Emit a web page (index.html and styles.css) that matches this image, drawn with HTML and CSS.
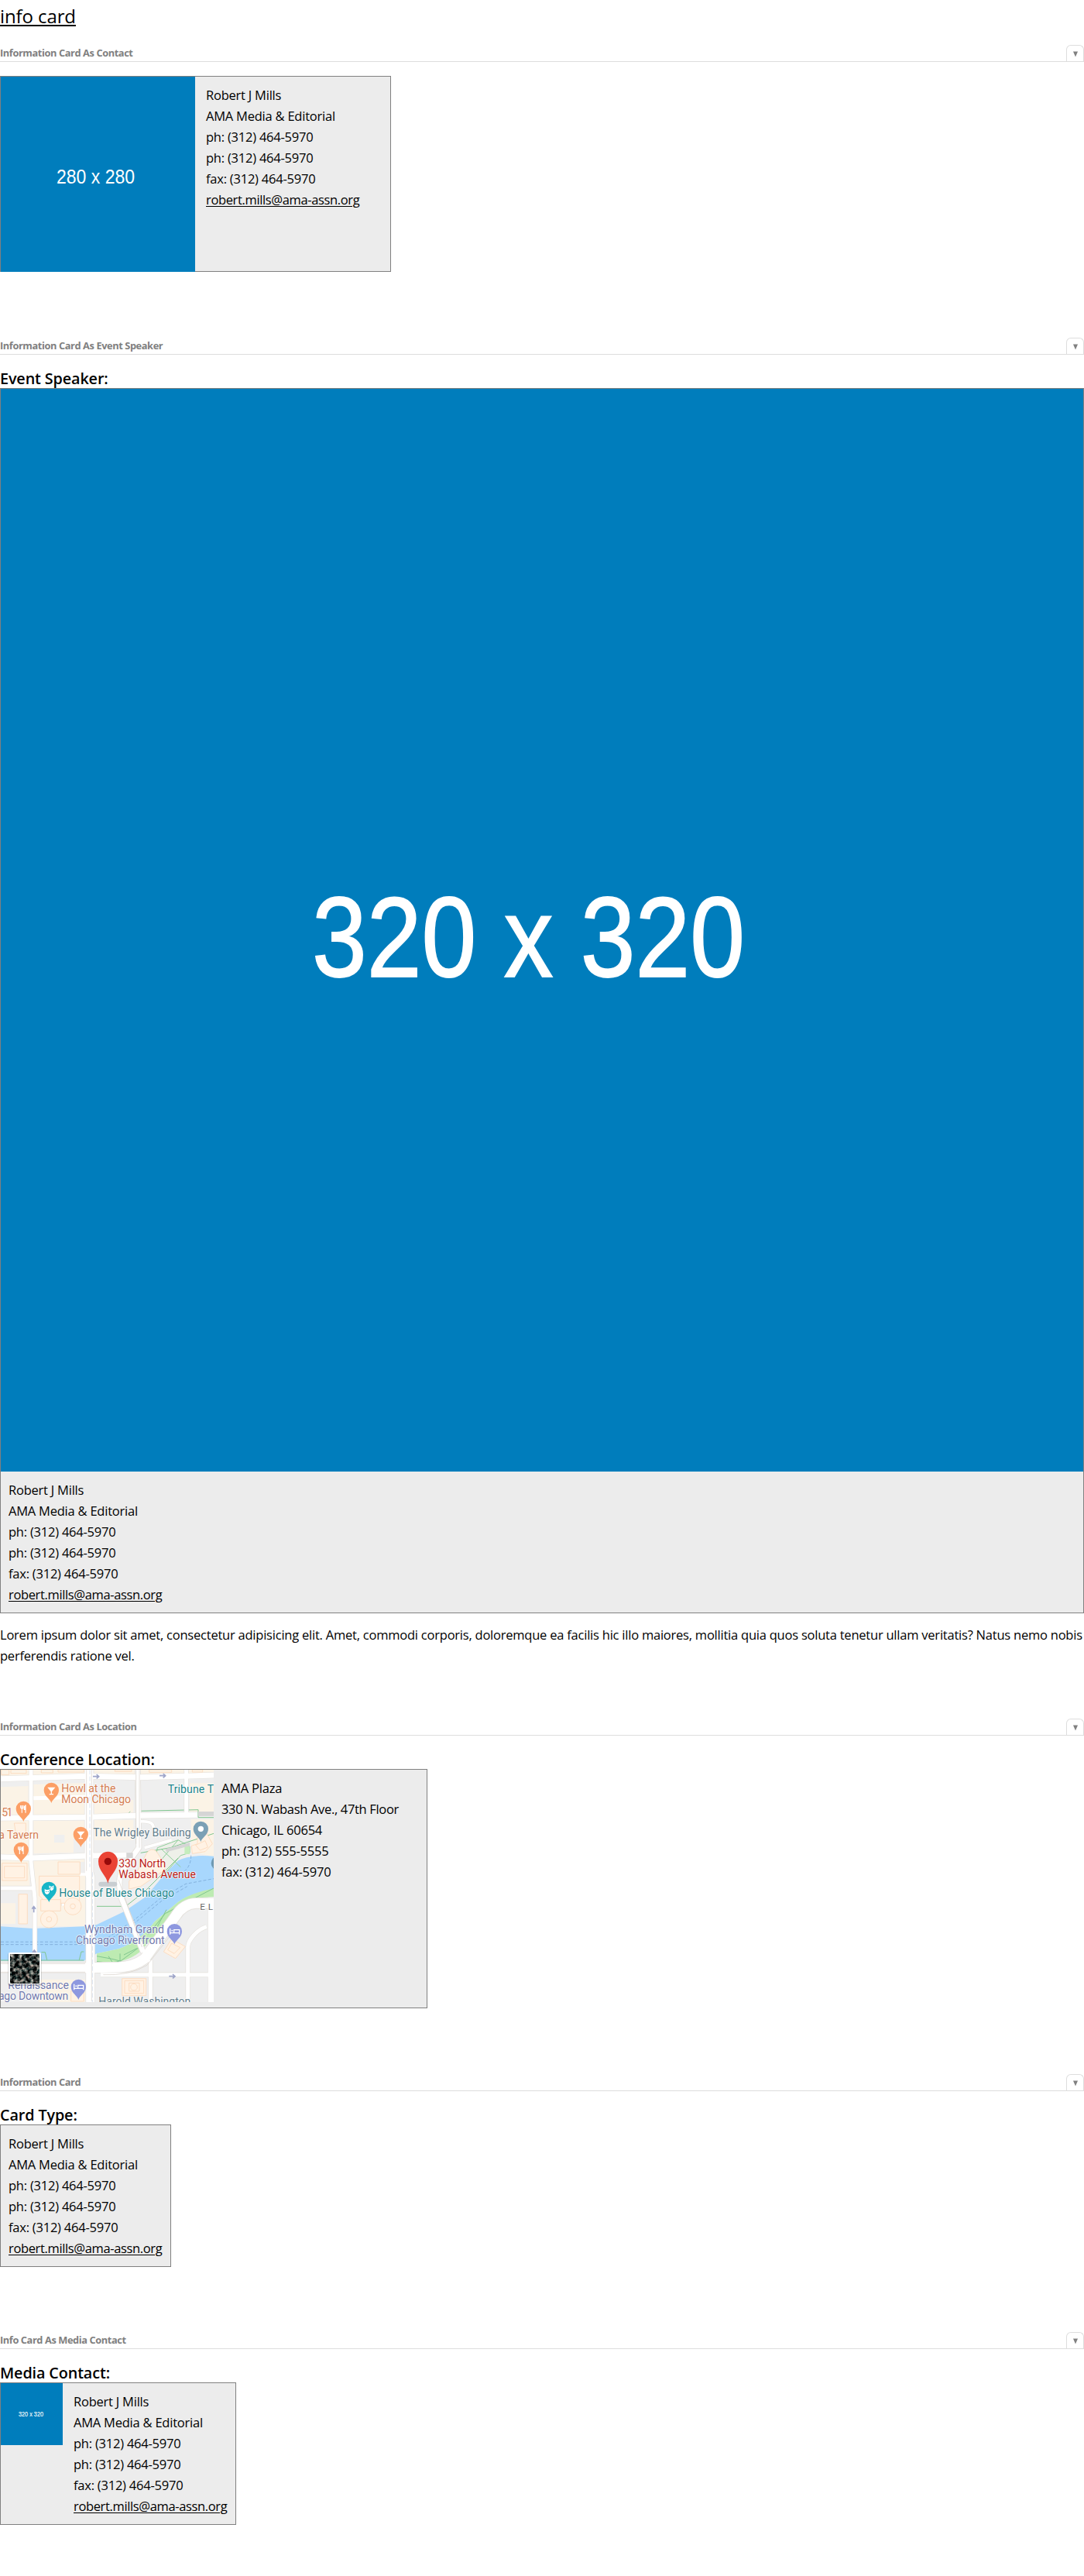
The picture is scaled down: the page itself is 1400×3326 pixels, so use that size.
FILE: index.html
```html
<!DOCTYPE html>
<html lang="en">
<head>
<meta charset="utf-8">
<title>Info card</title>
<link rel="stylesheet" href="styles.css">
</head>
<body>
<h1 class="page-title"><a href="#">info card</a></h1>

<section class="pattern">
  <header class="pattern-head"><h2 class="pattern-name">Information Card As Contact</h2><span class="toggle"><svg width="6" height="8" viewBox="0 0 6 8"><path d="M0 .5H6L3 7.5z"/></svg></span></header>
  <div class="card card-contact">
    <svg class="card-image contact-image" viewBox="0 0 251 252"><rect width="251" height="252"/><text x="72" y="137.5" font-size="26.5" textLength="101" lengthAdjust="spacingAndGlyphs">280 x 280</text></svg>
    <ul class="details">
      <li>Robert J Mills</li><li>AMA Media &amp; Editorial</li><li>ph: (312) 464-5970</li><li>ph: (312) 464-5970</li><li>fax: (312) 464-5970</li><li><a class="email" href="#">robert.mills@ama-assn.org</a></li>
    </ul>
  </div>
</section>

<section class="pattern pattern-speaker">
  <header class="pattern-head"><h2 class="pattern-name">Information Card As Event Speaker</h2><span class="toggle"><svg width="6" height="8" viewBox="0 0 6 8"><path d="M0 .5H6L3 7.5z"/></svg></span></header>
  <h3 class="card-title">Event Speaker:</h3>
  <div class="card card-speaker">
    <svg class="card-image speaker-image" viewBox="0 0 1398 1398"><rect width="1398" height="1398"/><text class="heavy" x="402" y="759" font-size="147" textLength="559" lengthAdjust="spacingAndGlyphs">320 x 320</text></svg>
    <ul class="details">
      <li>Robert J Mills</li><li>AMA Media &amp; Editorial</li><li>ph: (312) 464-5970</li><li>ph: (312) 464-5970</li><li>fax: (312) 464-5970</li><li><a class="email" href="#">robert.mills@ama-assn.org</a></li>
    </ul>
  </div>
  <p class="bio">Lorem ipsum dolor sit amet, consectetur adipisicing elit. Amet, commodi corporis, doloremque ea facilis hic illo maiores, mollitia quia quos soluta tenetur ullam veritatis? Natus nemo nobis perferendis ratione vel.</p>
</section>

<section class="pattern">
  <header class="pattern-head"><h2 class="pattern-name">Information Card As Location</h2><span class="toggle"><svg width="6" height="8" viewBox="0 0 6 8"><path d="M0 .5H6L3 7.5z"/></svg></span></header>
  <h3 class="card-title">Conference Location:</h3>
  <div class="card card-location">
    <svg class="map" viewBox="3 3 825 900">
      <defs>
        <path id="pin" d="M0 50C-4 34-29 24-29 0A28.500 28.500 0 0 1 29 0C29 24 4 34 0 50z"/>
        <g id="glass" fill="none" stroke="#fff" stroke-width="4"><path d="M-11-12H11L0 1zM0 0V12M-8 13H8"/><path d="M-6-8H6L0 0z" fill="#fff"/></g>
        <g id="fork" fill="none" stroke="#fff" stroke-width="3.500"><path d="M-11-14V-6Q-11-2-6-2Q-1-2-1-6V-14M-6-14V15"/><path d="M8 15V-14Q1-10 3 2H8" fill="#fff"/></g>
        <g id="bed" fill="none" stroke="#fff" stroke-width="4"><path d="M-18-11V12M-18 6H18V12M18 5V-6H-3V5"/><circle cx="-10" cy="-3" r="3" fill="#fff" stroke="none"/></g>
        <filter id="grain" x="0" y="0" width="100%" height="100%" color-interpolation-filters="sRGB"><feTurbulence type="fractalNoise" baseFrequency=".07" numOctaves="3" seed="8"/><feColorMatrix values="1.800 0 0 0 -.69  1.600 .2 0 0 -.66  1.500 .2 0 0 -.62  0 0 0 0 1"/></filter>
      </defs>
      <rect width="840" height="910" fill="#efefef"/>
      <!-- city blocks -->
      <g fill="#fbf3e6">
        <path d="M3 3H330V22L3 30zM365 3H828V18L365 22zM3 70L110 66V178H3zM130 60L330 54V178L130 182zM365 120H517V172L365 176zM735 55H828V165H735zM3 200H115V330H3zM130 200H330V325H235L130 328zM365 197H517V275H365zM3 350H115V455H3zM3 470H60V600H3zM130 350H330V610H130zM740 195H828V340L740 320zM150 815H330V903H150z"/>
      </g>
      <g fill="#efefef"><path d="M285 270H330V325H285zM210 255H250V285H210zM3 470H70V520H3zM270 360H330V405H270z"/></g>
      <!-- river and parks -->
      <path d="M3 610L130 618L325 610L375 603L480 553L565 495L640 405L690 355Q735 330 828 338V468Q740 480 690 515L600 590Q545 665 460 697L375 715L325 743H3z" fill="#a8d7fd"/>
      <path d="M828 463Q740 480 690 515L600 590Q545 665 460 697L375 715V752Q480 758 540 710L645 595Q690 520 750 500L828 495z" fill="#bdebb2"/>
      <path d="M610 305L690 275L735 300V325L700 335L640 405L600 360zM625 310L700 380M690 275L610 370" fill="#eef0e9" stroke="#8fcf9a" stroke-width="3"/>
      <path d="M715 298H735V330H715z" fill="#c5edbd"/>
      <g fill="none" stroke="#80c68f" stroke-width="3">
        <path d="M495 174L505 165M535 163L768 158V188H828M735 188L750 175M545 325L660 305L828 250M375 532H470M492 528L560 475L690 345M3 741H325M160 710H175L182 740M325 708H315L307 740M375 746Q440 755 470 742L540 690M575 640L640 560L828 462M610 610L645 545M465 750V715M440 755L420 725M375 725L430 735L470 745M480 720L530 695"/>
      </g>
      <g fill="none" stroke="#6f9dcc" stroke-width="2" stroke-dasharray="12 7">
        <path d="M3 670H300L400 665L520 585L620 502L720 445L828 425M3 680H330L420 665L530 590L625 512L725 455M740 335Q740 375 715 395"/>
      </g>
      <!-- streets: edge first, surface above -->
      <g fill="none" stroke="#e4e1dc" stroke-linejoin="round">
        <g stroke-width="24"><path d="M-10 39L340 28L540 32L840 24M-10 190L340 187L520 181L765 178M-10 341L120 345L345 336L490 333"/></g>
        <path d="M-10 462H128M722 -10V170M120 -10V360L135 500V780" stroke-width="19"/>
        <path d="M533 -10L538 305L470 400Q455 440 470 500L555 710" stroke-width="24"/>
        <path d="M345 -10V400L350 420V910" stroke-width="37"/>
        <path d="M-10 770H350L460 768Q520 765 560 735L680 570Q710 522 760 520H840" stroke-width="44"/>
        <path d="M390 797H840M583 740V910M728 910V690Q728 670 750 645T800 611" stroke-width="19"/>
        <path d="M545 203Q590 203 593 220L605 265M560 305L665 275M245 490V530" stroke-width="14"/>
        <path d="M818 500V910" stroke-width="28"/>
      </g>
      <g fill="none" stroke="#fff" stroke-linejoin="round">
        <g stroke-width="21"><path d="M-10 39L340 28L540 32L840 24M-10 190L340 187L520 181L765 178M-10 341L120 345L345 336L490 333"/></g>
        <path d="M-10 462H128M130 113L345 108M722 -10V170M120 -10V360L135 500V780" stroke-width="15"/>
        <path d="M533 -10L538 305L470 400Q455 440 470 500L555 710" stroke-width="19"/>
        <path d="M345 -10V400L350 420V910" stroke-width="33"/>
        <path d="M-10 770H350L460 768Q520 765 560 735L680 570Q710 522 760 520H840" stroke-width="39"/>
        <path d="M390 797H840M583 740V910M728 910V690Q728 670 750 645T800 611" stroke-width="15"/>
        <path d="M545 203Q590 203 593 220L605 265M560 305L665 275M245 490V530M310 408H335" stroke-width="11"/>
        <path d="M818 500V910" stroke-width="24"/>
      </g>
      <g fill="none" stroke="#d8d0c8" stroke-width="2"><path d="M3 787H330M527 3V290M540 3V305M335 3V395M355 3V900M460 430L550 690M400 797Q500 802 570 760L680 620M3 754H330"/></g>
      <path d="M348 3V380M358 400V903" stroke="#dbe4f0" stroke-width="3" stroke-dasharray="18 8"/>
      <path d="M768 165H828V182H768zM640 310L735 285V298L645 322zM490 325H515V345H490z" fill="#d5d5d5"/>
      <rect x="382" y="437" width="72" height="18" rx="9" fill="#c8cdd1"/>
      <!-- building outlines -->
      <g fill="#fff2e4" stroke="#fbd9ba" stroke-width="2.500">
        <path d="M5 3H35V22H5zM42 3H102V17H42zM160 3H205V15H160zM225 3H325V12H225zM445 3H510V10H445zM578 3H665V13H578zM745 3H785V12H745z" fill="none"/>
        <path d="M8 365H105V432H8zM17 377H95V422H17zM225 360H310V408H225zM152 415H308V520H180L152 490zM72 485H106V600H72zM55 210H100V270H65z"/>
        <path d="M158 506H235V550H158z"/><circle cx="190" cy="582" r="33"/><circle cx="190" cy="582" r="10"/><circle cx="282" cy="532" r="33"/><circle cx="282" cy="532" r="10"/>
        <path d="M569 325Q585 303 605 318L630 355L640 390L545 455L500 465V435L535 390zM765 265L800 248L823 290L795 320L745 328L742 298L765 290zM758 295L795 278L805 303L775 315zM665 658L718 688L680 734L634 708zM665 675L698 692L675 715L650 701z"/>
        <path d="M473 812H566V878H473zM483 820H557V869H483zM500 829H540V861H500z"/><circle cx="519" cy="845" r="13"/><path d="M275 860H325V900H275z"/>
      </g>
      <g fill="none" stroke="#9ea5c9" stroke-width="5"><path d="M360 29H382M374 21L383 29L374 37M618 26H640M632 18L641 26L632 34M655 803H677M669 795L678 803L669 811M131 556V534M124 542L131 533L138 542M133 715V702M126 711L133 702L140 711"/></g>
      <!-- pins -->
      <g fill="#fc9f66"><use href="#pin" x="199" y="82"/><use href="#pin" x="91" y="154"/><use href="#pin" x="313" y="253"/><use href="#pin" x="82" y="313"/></g>
      <use href="#glass" x="199" y="85"/><use href="#glass" x="313" y="256"/><use href="#fork" x="91" y="155"/><use href="#fork" x="82" y="315"/>
      <use href="#pin" x="778" y="232" fill="#7ba0b5"/><circle cx="778" cy="232" r="11" fill="#fff"/>
      <circle cx="845" cy="365" r="27" fill="#6f99b2"/>
      <use href="#pin" x="190" y="466" fill="#18b5c7"/>
      <path d="M173 464L178 468H188L192 464V477Q190 485 182 486Q174 484 173 476zM191 451L196 455H203L208 450V463Q207 471 199 472L194 468V461L190 460z" fill="#fff"/><path d="M177 475H181M185 475H189M195 460H198M202 460H205" stroke="#18b5c7" stroke-width="3"/>
      <g fill="#8e98df"><use href="#pin" x="676" y="629"/><use href="#pin" x="304" y="844"/></g><use href="#bed" x="677" y="629"/><use href="#bed" x="305" y="844"/>
      <path d="M418 443C412 412 381 396 381 358A37.500 37.500 0 0 1 456 358C456 396 424 412 418 443z" fill="#ea4335"/><circle cx="418" cy="358" r="14" fill="#960a0a"/>
      <g class="map-labels">
        <g fill="#d57d51"><text x="238" y="90" textLength="210">Howl at the</text><text x="238" y="132" textLength="269">Moon Chicago</text><text x="7" y="184" textLength="42">51</text><text x="-5" y="270" textLength="155">a Tavern</text></g>
        <text x="650" y="92" textLength="178" fill="#20858c">Tribune T</text>
        <text x="361" y="261" textLength="379" fill="#627d8c">The Wrigley Building</text>
        <g fill="#bd1e18"><text x="460" y="381" textLength="183">330 North</text><text x="460" y="423" textLength="299">Wabash Avenue</text></g>
        <text x="229" y="495" textLength="446" fill="#20858c">House of Blues Chicago</text>
        <g fill="#7179ad"><text x="327" y="636" textLength="309">Wyndham Grand</text><text x="294" y="678" textLength="344">Chicago Riverfront</text><text x="31" y="852" textLength="236">Renaissance</text><text x="-6" y="894" textLength="271">ago Downtown</text></g>
        <text x="775" y="546" font-size="35" textLength="50" fill="#666">E L</text>
        <text x="382" y="914" textLength="357" fill="#627d8c">Harold Washington</text>
      </g>
      <rect x="31" y="713" width="130" height="126" rx="6" fill="#0003"/>
      <rect x="33" y="711" width="126" height="122" rx="5" fill="#fff"/>
      <rect x="39" y="717" width="114" height="113" fill="#293334"/>
      <rect x="39" y="717" width="114" height="113" filter="url(#grain)"/>
    </svg>
    <ul class="details">
      <li>AMA Plaza</li><li class="street">330 N. Wabash Ave., 47th Floor</li><li>Chicago, IL 60654</li><li>ph: (312) 555-5555</li><li>fax: (312) 464-5970</li>
    </ul>
  </div>
</section>

<section class="pattern pattern-plain">
  <header class="pattern-head"><h2 class="pattern-name">Information Card</h2><span class="toggle"><svg width="6" height="8" viewBox="0 0 6 8"><path d="M0 .5H6L3 7.5z"/></svg></span></header>
  <h3 class="card-title">Card Type:</h3>
  <div class="card card-plain">
    <ul class="details">
      <li>Robert J Mills</li><li>AMA Media &amp; Editorial</li><li>ph: (312) 464-5970</li><li>ph: (312) 464-5970</li><li>fax: (312) 464-5970</li><li><a class="email" href="#">robert.mills@ama-assn.org</a></li>
    </ul>
  </div>
</section>

<section class="pattern">
  <header class="pattern-head"><h2 class="pattern-name">Info Card As Media Contact</h2><span class="toggle"><svg width="6" height="8" viewBox="0 0 6 8"><path d="M0 .5H6L3 7.5z"/></svg></span></header>
  <h3 class="card-title">Media Contact:</h3>
  <div class="card card-media">
    <svg class="card-image media-image" viewBox="0 0 1398 1398"><rect width="1398" height="1398"/><text class="heavy" x="402" y="759" font-size="147" textLength="559" lengthAdjust="spacingAndGlyphs">320 x 320</text></svg>
    <ul class="details">
      <li>Robert J Mills</li><li>AMA Media &amp; Editorial</li><li>ph: (312) 464-5970</li><li>ph: (312) 464-5970</li><li>fax: (312) 464-5970</li><li><a class="email" href="#">robert.mills@ama-assn.org</a></li>
    </ul>
  </div>
</section>
</body>
</html>
```
FILE: styles.css
```css
* { box-sizing: border-box; }
body {
  margin: 0;
  min-height: 3326px;
  background: #fff;
  color: #000;
  font: 16.5px/27px "Open Sans", "Noto Sans", sans-serif;
  letter-spacing: -0.225px;
}
h1, h2, h3, p, ul { margin: 0; padding: 0; }
a { color: inherit; }
svg { display: block; flex: none; }

.page-title {
  margin-bottom: 16px;
  font-size: 24px;
  font-weight: 400;
  line-height: 42px;
  letter-spacing: -0.1px;
}
.page-title a {
  text-decoration-thickness: 2px;
  text-underline-offset: 2px;
  text-decoration-skip-ink: none;
}

.pattern { margin-bottom: 85px; }
.pattern-speaker { margin-bottom: 68px; }
.pattern-plain { margin-bottom: 84px; }
.pattern-head {
  display: flex;
  justify-content: space-between;
  height: 22px;
  border-bottom: 1px solid #ddd;
}
.pattern-name {
  color: #808080;
  font-size: 12.8px;
  font-weight: 700;
  line-height: 21px;
  letter-spacing: -0.4px;
}
.toggle {
  display: flex;
  align-items: center;
  justify-content: center;
  width: 23px;
  padding-top: 2px;
  border: 1px solid #ddd;
  border-bottom: 0;
  border-radius: 6px 6px 0 0;
}
.toggle svg { fill: #808080; }

.card-title {
  padding-top: 18px;
  font-size: 19.8px;
  font-weight: 600;
  line-height: 25px;
  letter-spacing: -0.12px;
}
.card {
  display: flex;
  align-items: flex-start;
  border: 1px solid #808080;
  background: #ececec;
}
.details { padding: 10px; list-style: none; }
.street { letter-spacing: -0.33px; }
.email {
  letter-spacing: -0.36px;
  text-decoration-thickness: 1px;
  text-underline-offset: 2px;
}

.card-image rect { fill: #007dbc; }
.card-image text { fill: #fff; font-family: "Liberation Sans", sans-serif; letter-spacing: 0; }
.card-image .heavy { stroke: #fff; stroke-width: 1.8px; }

.card-contact { width: 505px; height: 253px; margin-top: 18px; }
.contact-image { width: 251px; height: 252px; }
.card-contact .details, .card-media .details { padding-left: 14px; }
.card-speaker { flex-direction: column; height: 1582px; }
.speaker-image { width: 1398px; height: 1398px; }
.bio { margin-top: 14px; }
.card-location { width: 552px; height: 309px; }
.map { width: 275px; height: 300px; overflow: hidden; }
.map-labels {
  font: 42px Roboto, sans-serif;
  letter-spacing: 0;
  paint-order: stroke;
  stroke: #fffc;
  stroke-width: 5px;
  stroke-linejoin: round;
}
.card-plain { width: 221px; height: 184px; }
.card-media { width: 305px; height: 184px; }
.media-image { width: 80px; height: 80px; }
```
